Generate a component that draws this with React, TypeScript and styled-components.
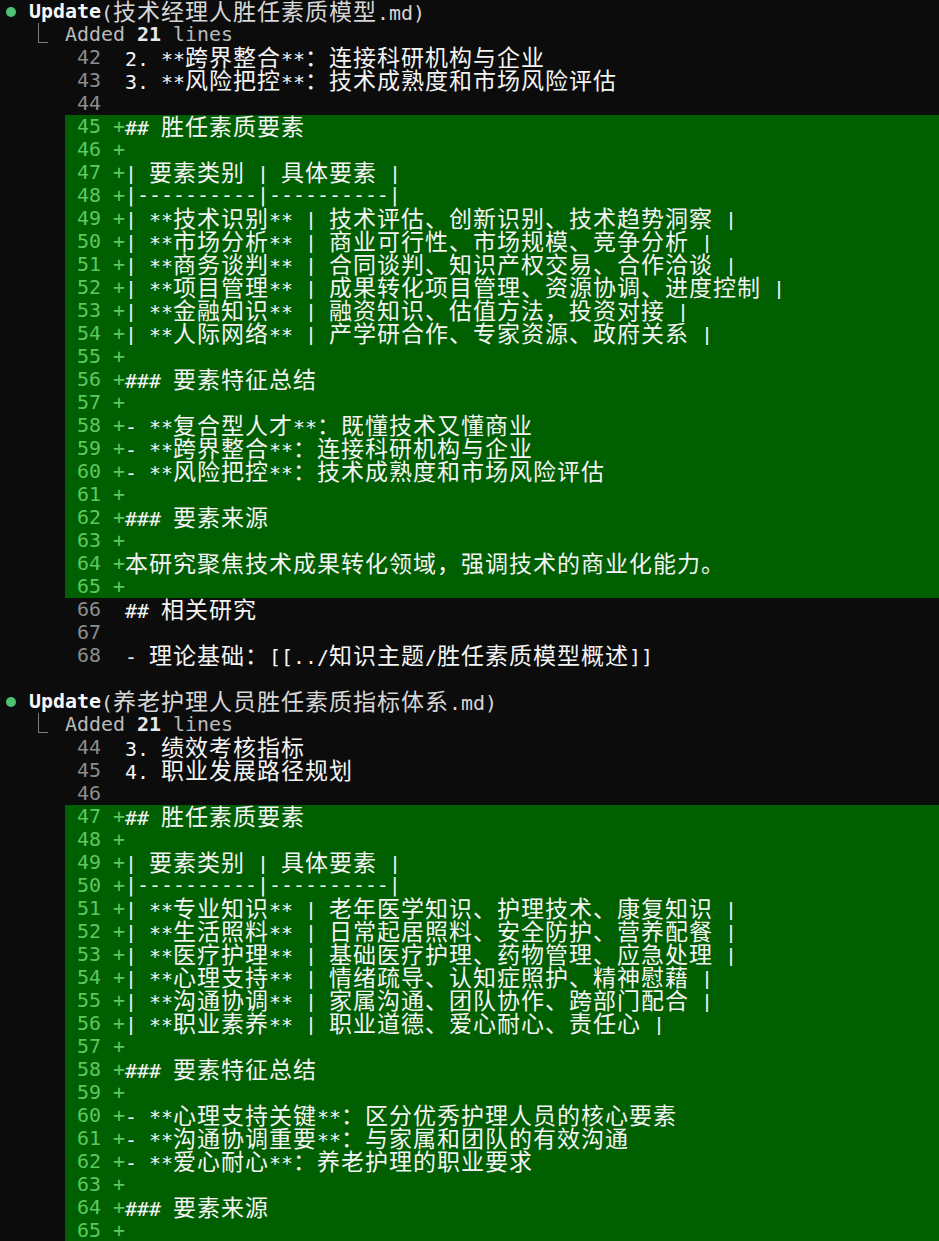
import React from "react";
import styled, { createGlobalStyle } from "styled-components";

const GlobalStyle = createGlobalStyle`
  html, body {
    margin: 0;
    padding: 0;
    background: #0c0c0c;
  }
  body {
    font-family: "DejaVu Sans Mono", "Noto Sans CJK SC", monospace;
  }
`;

const Screen = styled.div`
  background: #0c0c0c;
  min-height: 1241px;
  padding-left: 5px;
  font-family: "DejaVu Sans Mono", "Noto Sans CJK SC", monospace;
  font-size: 19.93px;
  color: #f2f2f2;
`;

const Block = styled.section`
  display: flex;
  flex-direction: column;
`;

const Row = styled.div`
  height: 23px;
  line-height: 23px;
  white-space: pre;
  display: flex;
  align-items: center;
`;

const Bullet = styled.span`
  width: 24px;
  height: 23px;
  display: flex;
  align-items: center;
  &::before {
    content: "";
    display: block;
    width: 10px;
    height: 10px;
    margin-left: 1px;
    border-radius: 50%;
    background: #4cc273;
  }
`;

const Verb = styled.span`
  font-weight: bold;
  color: #f7f7f7;
`;

const Args = styled.span`
  color: #d6d6d6;
`;

const Elbow = styled.span`
  align-self: flex-start;
  margin-left: 33px;
  width: 9px;
  height: 19px;
  border-left: 1.5px solid #7c7c7c;
  border-bottom: 1.5px solid #7c7c7c;
`;

const Summary = styled.span`
  margin-left: 17px;
  color: #bababa;
`;

const Count = styled.span`
  font-weight: bold;
  color: #e8e8e8;
`;

const DiffRow = styled(Row)<{ $added: boolean }>`
  margin-left: 60px;
  background: ${(p) => (p.$added ? "#005f00" : "transparent")};
`;

const LineNo = styled.span<{ $added: boolean }>`
  width: 36px;
  text-align: right;
  color: ${(p) => (p.$added ? "#5cc860" : "#8c8c8c")};
`;

const Sign = styled.span`
  width: 12px;
  margin-left: 12px;
  color: #5cc860;
`;

const Code = styled.span`
  color: #f4f4f4;
`;

const Wide = styled.span`
  font-family: "Noto Sans CJK SC", sans-serif;
  font-size: 23px;
  letter-spacing: 1px;
  line-height: 23px;
`;

const Spacer = styled.div`
  height: 23px;
`;

const CJK = /([\u2E80-\u9FFF\uFF00-\uFFEF\u3000-\u303F]+)/;

function renderText(s: string) {
  return s.split(CJK).map((part, i) =>
    part === "" ? null : CJK.test(part) ? (
      <Wide key={i}>{part}</Wide>
    ) : (
      <React.Fragment key={i}>{part}</React.Fragment>
    )
  );
}

type Line = { n: number; a: boolean; t: string };

const ctx = (n: number, t: string): Line => ({ n, a: false, t });
const add = (n: number, t: string): Line => ({ n, a: true, t });

const block1: Line[] = [
  ctx(42, "2. **跨界整合**：连接科研机构与企业"),
  ctx(43, "3. **风险把控**：技术成熟度和市场风险评估"),
  ctx(44, ""),
  add(45, "## 胜任素质要素"),
  add(46, ""),
  add(47, "| 要素类别 | 具体要素 |"),
  add(48, "|----------|----------|"),
  add(49, "| **技术识别** | 技术评估、创新识别、技术趋势洞察 |"),
  add(50, "| **市场分析** | 商业可行性、市场规模、竞争分析 |"),
  add(51, "| **商务谈判** | 合同谈判、知识产权交易、合作洽谈 |"),
  add(52, "| **项目管理** | 成果转化项目管理、资源协调、进度控制 |"),
  add(53, "| **金融知识** | 融资知识、估值方法，投资对接 |"),
  add(54, "| **人际网络** | 产学研合作、专家资源、政府关系 |"),
  add(55, ""),
  add(56, "### 要素特征总结"),
  add(57, ""),
  add(58, "- **复合型人才**：既懂技术又懂商业"),
  add(59, "- **跨界整合**：连接科研机构与企业"),
  add(60, "- **风险把控**：技术成熟度和市场风险评估"),
  add(61, ""),
  add(62, "### 要素来源"),
  add(63, ""),
  add(64, "本研究聚焦技术成果转化领域，强调技术的商业化能力。"),
  add(65, ""),
  ctx(66, "## 相关研究"),
  ctx(67, ""),
  ctx(68, "- 理论基础：[[../知识主题/胜任素质模型概述]]"),
];

const block2: Line[] = [
  ctx(44, "3. 绩效考核指标"),
  ctx(45, "4. 职业发展路径规划"),
  ctx(46, ""),
  add(47, "## 胜任素质要素"),
  add(48, ""),
  add(49, "| 要素类别 | 具体要素 |"),
  add(50, "|----------|----------|"),
  add(51, "| **专业知识** | 老年医学知识、护理技术、康复知识 |"),
  add(52, "| **生活照料** | 日常起居照料、安全防护、营养配餐 |"),
  add(53, "| **医疗护理** | 基础医疗护理、药物管理、应急处理 |"),
  add(54, "| **心理支持** | 情绪疏导、认知症照护、精神慰藉 |"),
  add(55, "| **沟通协调** | 家属沟通、团队协作、跨部门配合 |"),
  add(56, "| **职业素养** | 职业道德、爱心耐心、责任心 |"),
  add(57, ""),
  add(58, "### 要素特征总结"),
  add(59, ""),
  add(60, "- **心理支持关键**：区分优秀护理人员的核心要素"),
  add(61, "- **沟通协调重要**：与家属和团队的有效沟通"),
  add(62, "- **爱心耐心**：养老护理的职业要求"),
  add(63, ""),
  add(64, "### 要素来源"),
  add(65, ""),
];

function UpdateBlock({ file, count, lines }: { file: string; count: number; lines: Line[] }) {
  return (
    <Block>
      <Row>
        <Bullet />
        <Verb>Update</Verb>
        <Args>
          ({renderText(file)})
        </Args>
      </Row>
      <Row>
        <Elbow />
        <Summary>
          Added <Count>{count}</Count> lines
        </Summary>
      </Row>
      {lines.map((l) => (
        <DiffRow key={l.n} $added={l.a}>
          <LineNo $added={l.a}>{l.n}</LineNo>
          <Sign>{l.a ? "+" : " "}</Sign>
          <Code>{renderText(l.t)}</Code>
        </DiffRow>
      ))}
    </Block>
  );
}

export default function App() {
  return (
    <>
      <GlobalStyle />
      <Screen>
        <UpdateBlock file="技术经理人胜任素质模型.md" count={21} lines={block1} />
        <Spacer />
        <UpdateBlock file="养老护理人员胜任素质指标体系.md" count={21} lines={block2} />
      </Screen>
    </>
  );
}
